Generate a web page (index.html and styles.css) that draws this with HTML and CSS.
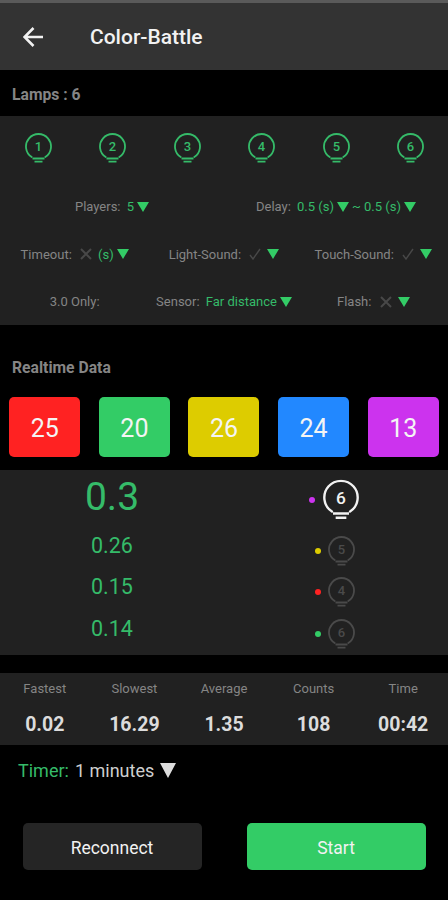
FILE: index.html
```html
<!DOCTYPE html>
<html lang="en">
<head>
  <meta charset="UTF-8" />
  <meta name="viewport" content="width=device-width, initial-scale=1" />
  <title>Color-Battle</title>
  <link rel="stylesheet" href="styles.css">
</head>
<body>
  <svg class="defs" width="0" height="0">
    <symbol id="bulb" viewBox="0 0 27 30">
      <path d="M6.7 24A12.5 12.5 0 1 1 20.3 24" fill="none" stroke="currentColor" stroke-width="1.8" stroke-linecap="round" />
      <path d="M7.5 25.5H19.5M9.5 28.7H17.5" fill="none" stroke="currentColor" stroke-width="1.8" />
    </symbol>
    <symbol id="cross" viewBox="0 0 12 12">
      <path d="M1 1L11 11M11 1L1 11" fill="none" stroke="currentColor" stroke-width="2" />
    </symbol>
    <symbol id="tick" viewBox="0 0 12 12">
      <path d="M1 7L4 11L11 1" fill="none" stroke="currentColor" stroke-width="1.4" />
    </symbol>
    <symbol id="back" viewBox="0 0 20 20">
      <path d="M20 10H2M10.5 1L1.5 10L10.5 19" fill="none" stroke="currentColor" stroke-width="2.6" />
    </symbol>
  </svg>

  <div class="status-edge"></div>
  <header class="topbar">
    <svg class="back-icon"><use href="#back" /></svg>
    <h1>Color-Battle</h1>
  </header>

  <div class="section-title lamps-title">Lamps : 6</div>

  <section class="panel settings">
    <div class="lamps">
      <svg class="bulb" viewBox="0 0 27 30"><use href="#bulb" /><text x="13.5" y="18">1</text></svg>
      <svg class="bulb" viewBox="0 0 27 30"><use href="#bulb" /><text x="13.5" y="18">2</text></svg>
      <svg class="bulb" viewBox="0 0 27 30"><use href="#bulb" /><text x="13.5" y="18">3</text></svg>
      <svg class="bulb" viewBox="0 0 27 30"><use href="#bulb" /><text x="13.5" y="18">4</text></svg>
      <svg class="bulb" viewBox="0 0 27 30"><use href="#bulb" /><text x="13.5" y="18">5</text></svg>
      <svg class="bulb" viewBox="0 0 27 30"><use href="#bulb" /><text x="13.5" y="18">6</text></svg>
    </div>

    <div class="opts two">
      <div class="opt">Players: <b>5</b><i class="caret"></i></div>
      <div class="opt">Delay: <b>0.5 (s)</b><i class="caret"></i><b>~ 0.5 (s)</b><i class="caret"></i></div>
    </div>
    <div class="opts three">
      <div class="opt">Timeout: <svg class="mark cross"><use href="#cross" /></svg><b>(s)</b><i class="caret"></i></div>
      <div class="opt">Light-Sound: <svg class="mark tick"><use href="#tick" /></svg><i class="caret"></i></div>
      <div class="opt">Touch-Sound: <svg class="mark tick"><use href="#tick" /></svg><i class="caret"></i></div>
    </div>
    <div class="opts three">
      <div class="opt">3.0 Only:</div>
      <div class="opt">Sensor: <b>Far distance</b><i class="caret"></i></div>
      <div class="opt">Flash: <svg class="mark cross"><use href="#cross" /></svg><i class="caret"></i></div>
    </div>
  </section>

  <div class="section-title realtime-title">Realtime Data</div>

  <div class="tiles">
    <div class="tile red">25</div>
    <div class="tile green">20</div>
    <div class="tile yellow">26</div>
    <div class="tile blue">24</div>
    <div class="tile purple">13</div>
  </div>

  <section class="panel ranking">
    <div class="rank first">
      <span class="time">0.3</span>
      <span class="who"><i class="dot purple"></i><svg class="rank-bulb" viewBox="0 0 27 30"><use href="#bulb" /><text x="13.5" y="18">6</text></svg></span>
    </div>
    <div class="rank">
      <span class="time">0.26</span>
      <span class="who"><i class="dot yellow"></i><svg class="rank-bulb" viewBox="0 0 27 30"><use href="#bulb" /><text x="13.5" y="18">5</text></svg></span>
    </div>
    <div class="rank">
      <span class="time">0.15</span>
      <span class="who"><i class="dot red"></i><svg class="rank-bulb" viewBox="0 0 27 30"><use href="#bulb" /><text x="13.5" y="18">4</text></svg></span>
    </div>
    <div class="rank">
      <span class="time">0.14</span>
      <span class="who"><i class="dot green"></i><svg class="rank-bulb" viewBox="0 0 27 30"><use href="#bulb" /><text x="13.5" y="18">6</text></svg></span>
    </div>
  </section>

  <section class="panel stats">
    <div class="stat"><label>Fastest</label><strong>0.02</strong></div>
    <div class="stat"><label>Slowest</label><strong>16.29</strong></div>
    <div class="stat"><label>Average</label><strong>1.35</strong></div>
    <div class="stat"><label>Counts</label><strong>108</strong></div>
    <div class="stat"><label>Time</label><strong>00:42</strong></div>
  </section>

  <div class="timer"><span>Timer:</span> 1 minutes<i class="caret light"></i></div>

  <div class="actions">
    <button class="btn dark">Reconnect</button>
    <button class="btn go">Start</button>
  </div>
</body>
</html>
```

FILE: styles.css
```css
:root {
  --panel: #212121;
  --label: #858585;
  --accent: #35bb69;
  --bright: #33cc66;
  --mark: #484848;
}

* {
  box-sizing: border-box;
}

html,
body {
  height: 900px;
  overflow: hidden;
}

body {
  margin: 0;
  background-color: #000;
  font-family: Roboto, "Liberation Sans", sans-serif;
  color: var(--label);
}

.defs {
  display: block;
  height: 0;
}

.status-edge {
  height: 3px;
  background-color: #5a5a5a;
}

.topbar {
  height: 67px;
  background-color: #333;
  display: flex;
  align-items: center;
  color: #f2f2f2;
}

.back-icon {
  width: 20px;
  height: 20px;
  margin: 0 0 0 23px;
}

h1 {
  margin: 0 0 0 47px;
  font-size: 21px;
  font-weight: 500;
}

.section-title {
  font-size: 15.7px;
  font-weight: 700;
  padding-left: 12px;
  color: #858585;
}

.lamps-title {
  height: 46px;
  line-height: 50px;
}

.realtime-title {
  height: 72px;
  padding-top: 34px;
  line-height: 18px;
}

.panel {
  background-color: var(--panel);
}

.settings {
  height: 209px;
}

.lamps {
  display: grid;
  grid-template-columns: repeat(6, 1fr);
  justify-items: center;
  padding: 17px 0 0 1px;
  height: 67px;
  color: var(--accent);
}

.bulb {
  width: 27px;
  height: 30px;
}

.bulb text,
.rank-bulb text {
  fill: currentColor;
  font-size: 13px;
  font-weight: 500;
  text-anchor: middle;
}

.opts {
  display: grid;
  height: 47.5px;
  font-size: 13px;
  align-items: center;
  justify-items: center;
}

.two {
  grid-template-columns: 1fr 1fr;
}

.three {
  grid-template-columns: repeat(3, 1fr);
}

.opt {
  display: flex;
  align-items: center;
  gap: 3px;
  white-space: pre;
}

.opt b {
  font-weight: 400;
  color: var(--accent);
}

.caret {
  display: inline-block;
  width: 0;
  height: 0;
  border-left: 6px solid transparent;
  border-right: 6px solid transparent;
  border-top: 10px solid var(--bright);
}

.caret.light {
  border-left-width: 8px;
  border-right-width: 8px;
  border-top: 15px solid #ddd;
}

.mark {
  width: 12px;
  height: 12px;
  color: var(--mark);
  margin: 0 3px 0 2px;
}

.tiles {
  display: grid;
  grid-template-columns: repeat(5, 1fr);
  justify-items: center;
  height: 73px;
}

.tile {
  width: 71px;
  height: 60px;
  border-radius: 5px;
  color: #f4f4f4;
  font-size: 25px;
  line-height: 63px;
  text-align: center;
}

.tile.red {
  background-color: #ff2222;
}

.tile.green {
  background-color: #33cc66;
}

.tile.yellow {
  background-color: #ddcc00;
}

.tile.blue {
  background-color: #2288ff;
}

.tile.purple {
  background-color: #cc33ee;
}

.ranking {
  height: 185px;
  padding-top: 9px;
}

.rank {
  display: grid;
  grid-template-columns: 1fr 1fr;
  align-items: center;
  justify-items: center;
  height: 41.5px;
  color: var(--accent);
}

.rank.first {
  height: 50px;
  margin-bottom: 1px;
}

.time {
  font-size: 21.5px;
  margin-bottom: 11px;
}

.first .time {
  font-size: 39px;
  line-height: 36px;
  margin-bottom: 14px;
}

.who {
  display: flex;
  align-items: center;
  gap: 7px;
  color: #4a4a4a;
  margin-left: -2px;
}

.first .who {
  color: #f2f2f2;
  gap: 8px;
  margin: 0 0 9px -4px;
}

.rank-bulb {
  width: 27px;
  height: 30px;
}

.first .rank-bulb {
  width: 36px;
  height: 41px;
}

.dot {
  width: 6px;
  height: 6px;
  border-radius: 50%;
}

.dot.purple {
  background-color: #cc33ee;
}

.dot.yellow {
  background-color: #ddcc00;
}

.dot.red {
  background-color: #ff2222;
}

.dot.green {
  background-color: #33cc66;
}

.stats {
  margin-top: 18px;
  height: 72px;
  display: grid;
  grid-template-columns: repeat(5, 1fr);
  text-align: center;
}

.stat label {
  display: block;
  font-size: 13px;
  line-height: 15px;
  margin-top: 8px;
}

.stat strong {
  display: block;
  margin-top: 18px;
  font-size: 19.5px;
  line-height: 22px;
  font-weight: 700;
  color: #dcdcdc;
}

.timer {
  display: flex;
  align-items: center;
  gap: 6px;
  height: 51px;
  padding-left: 18px;
  font-size: 18px;
  color: #cfcfcf;
}

.timer span {
  color: var(--accent);
}

.actions {
  display: grid;
  grid-template-columns: 1fr 1fr;
  justify-items: center;
  margin-top: 27px;
}

.btn {
  width: 179px;
  height: 47px;
  border: none;
  border-radius: 5px;
  font-family: inherit;
  font-size: 17.5px;
  padding-top: 3px;
  color: #f2f2f2;
}

.btn.dark {
  background-color: #252525;
}

.btn.go {
  background-color: #33cc66;
}
```
